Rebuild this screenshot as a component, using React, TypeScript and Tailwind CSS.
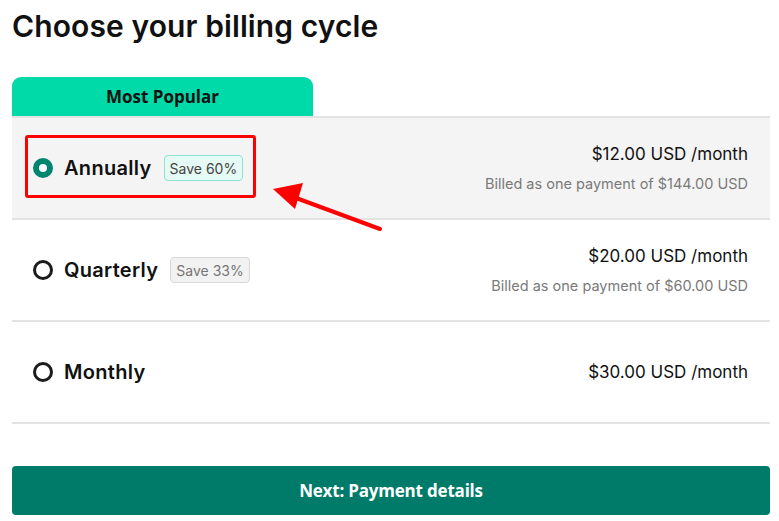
import React from 'react';

interface Plan {
  id: string;
  label: string;
  save?: string;
  price: string;
  billed?: string;
}

const plans: Plan[] = [
  { id: 'annual', label: 'Annually', save: 'Save 60%', price: '$12.00 USD /month', billed: 'Billed as one payment of $144.00 USD' },
  { id: 'quarter', label: 'Quarterly', save: 'Save 33%', price: '$20.00 USD /month', billed: 'Billed as one payment of $60.00 USD' },
  { id: 'month', label: 'Monthly', price: '$30.00 USD /month' },
];

const Radio: React.FC<{ checked: boolean }> = ({ checked }) =>
  checked ? (
    <span className="w-5 h-5 rounded-full border-[6px] border-[#00856f] bg-white shrink-0" />
  ) : (
    <span className="w-5 h-5 rounded-full border-[3px] border-[#1b1b1b] bg-white shrink-0" />
  );

const App: React.FC = () => {
  const selected = 'annual';

  return (
    <div className="w-[779px] h-[521px] bg-white pl-3 pt-[6px] font-['Inter',sans-serif] text-[#111]">
      <h1 className="text-[30px] font-semibold tracking-[0.1px] leading-[40px] text-[#111]">
        Choose your billing cycle
      </h1>

      <div className="mt-[31px] w-[758px]">
        {/* Most popular tab */}
        <div className="w-[301px] h-[39px] rounded-t-[9px] bg-[#00d9a8] flex items-center justify-center font-['Open_Sans',sans-serif] font-bold text-[17px] text-[#111]">
          Most Popular
        </div>

        {plans.map((p) => {
          const active = p.id === selected;
          return (
            <div
              key={p.id}
              className={`relative border-b-2 border-[#e3e3e3] flex items-center justify-between pl-[21px] pr-[22px] ${
                active ? 'h-[104px] bg-[#f4f4f4] border-t-2 z-10' : 'h-[102px] bg-white'
              }`}
            >
              <div className="flex items-center">
                <Radio checked={active} />
                <span className="ml-[11px] text-[20px] font-semibold tracking-[0.3px] text-[#111]">{p.label}</span>
                {p.save && (
                  <span
                    className={`ml-[12px] px-[5px] h-[26px] flex items-center rounded-[4px] border text-[14px] ${
                      active
                        ? 'bg-[#e6faf5] border-[#8ee3d0] text-[#444]'
                        : 'bg-[#f2f2f2] border-[#d8d8d8] text-[#767676]'
                    }`}
                  >
                    {p.save}
                  </span>
                )}
              </div>
              <div className="flex flex-col items-end">
                <span className="text-[17px] text-[#111] leading-[24px]">{p.price}</span>
                {p.billed && (
                  <span className="mt-[8px] text-[14.5px] text-[#7a7a7a] leading-[20px]">{p.billed}</span>
                )}
              </div>

              {active && (
                <>
                  <div className="absolute left-[13px] top-[17px] w-[231px] h-[63px] border-[3px] border-[#ff0000] rounded-[3px] pointer-events-none" />
                  <svg
                    className="absolute left-[246px] top-[58px] pointer-events-none overflow-visible"
                    width="140"
                    height="60"
                  >
                    <line x1="122" y1="53" x2="30" y2="19" stroke="#ff0000" strokeWidth="4" strokeLinecap="round" />
                    <polygon points="15,13 45,7 37,33" fill="#ff0000" />
                  </svg>
                </>
              )}
            </div>
          );
        })}

        <button className="mt-[42px] w-[758px] h-[49px] rounded-[4px] bg-[#007b6a] text-white font-['Open_Sans',sans-serif] font-bold text-[17px] tracking-[-0.2px]">
          Next: Payment details
        </button>
      </div>
    </div>
  );
};

export default App;
